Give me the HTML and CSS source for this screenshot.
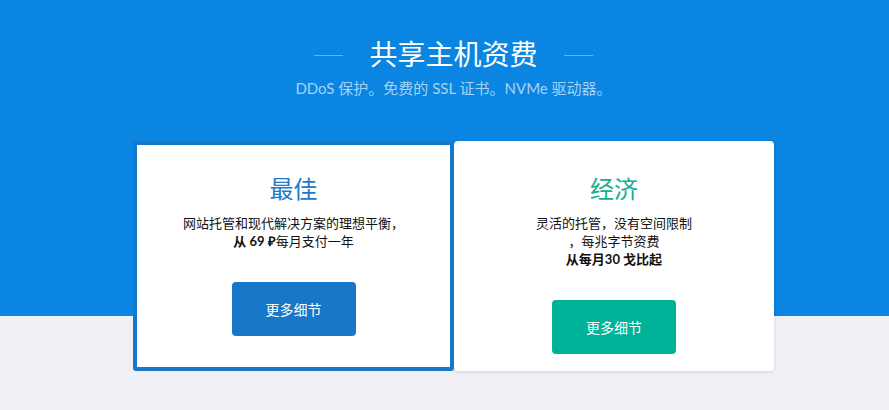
FILE: index.html
```html
<!DOCTYPE html>
<html lang="zh">
<head>
<meta charset="utf-8">
<link rel="stylesheet" href="styles.css">
</head>
<body>
<main class="page">
  <header class="hero">
    <div class="hero-title">
      <span class="hero-line"></span>
      <h1>共享主机资费</h1>
      <span class="hero-line"></span>
    </div>
    <p class="hero-sub">DDoS 保护。免费的 SSL 证书。NVMe 驱动器。</p>
  </header>
  <section class="plans">
    <article class="plan plan-active">
      <h2 class="plan-name plan-name-blue">最佳</h2>
      <p class="plan-desc">网站托管和现代解决方案的理想平衡，<br><b>从 69 ₽</b>每月支付一年</p>
      <a class="plan-btn plan-btn-blue" href="#">更多细节</a>
    </article>
    <article class="plan">
      <h2 class="plan-name plan-name-green">经济</h2>
      <p class="plan-desc">灵活的托管，没有空间限制<br>，每兆字节资费<br><b>从每月30 戈比起</b></p>
      <a class="plan-btn plan-btn-green" href="#">更多细节</a>
    </article>
  </section>
</main>
</body>
</html>
```
FILE: styles.css
```css
html, body {
  margin: 0;
  padding: 0;
}
body {
  font-family: Lato, "Noto Sans CJK SC", sans-serif;
  background: #f0f1f5;
  width: 889px;
  height: 410px;
  overflow: hidden;
}
.page {
  background: linear-gradient(to bottom, #0a85e2 0, #0a85e2 316px, #f0f1f5 316px);
  height: 410px;
  padding-left: 18px;
  box-sizing: border-box;
  display: flex;
  flex-direction: column;
  align-items: center;
}
.hero {
  padding-top: 35px;
  text-align: center;
}
.hero-title {
  display: flex;
  align-items: center;
  justify-content: center;
  gap: 26px;
}
.hero-title h1 {
  margin: 0;
  font-size: 28px;
  line-height: 36px;
  font-weight: 400;
  color: #ffffff;
  font-family: "Noto Sans CJK SC", sans-serif;
}
.hero-line {
  display: block;
  width: 29px;
  height: 1px;
  background: #62b3f1;
  margin-top: 4px;
}
.hero-sub {
  margin: 7px 0 0;
  font-size: 15px;
  line-height: 20px;
  color: #a4d3f7;
}
.plans {
  margin-top: 43px;
  width: 641px;
  display: grid;
  grid-template-columns: 321px 320px;
}
.plan {
  background: #ffffff;
  border: 4px solid #ffffff;
  border-radius: 4px;
  padding: 27px 0 13px;
  display: flex;
  flex-direction: column;
  align-items: center;
  text-align: center;
  box-shadow: 0 1px 4px rgba(0, 0, 0, 0.12);
}
.plan-active {
  border-color: #1777c9;
  border-radius: 3px;
  position: relative;
  z-index: 1;
  box-shadow: none;
}
.plan-name {
  margin: 0;
  font-size: 24px;
  line-height: 32px;
  font-weight: 400;
  font-family: "Noto Sans CJK SC", sans-serif;
}
.plan-name-blue { color: #2279c9; }
.plan-name-green { color: #16ad92; }
.plan-desc {
  margin: 10px 0 0;
  font-size: 13px;
  line-height: 18px;
  color: #111111;
}
.plan-desc b {
  font-weight: 700;
}
.plan-btn {
  margin-top: 32px;
  width: 124px;
  height: 54px;
  border-radius: 4px;
  display: flex;
  align-items: center;
  justify-content: center;
  color: #ffffff;
  font-size: 14px;
  text-decoration: none;
}
.plan-btn-blue { background: #1777c9; }
.plan-btn-green { background: #00b398; }
```
